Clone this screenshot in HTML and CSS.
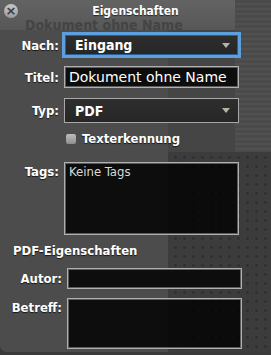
FILE: index.html
```html
<!DOCTYPE html>
<html lang="de">
<head>
    <meta charset="UTF-8">
    <title>Eigenschaften</title>
    <link rel="stylesheet" href="styles.css">
</head>
<body>
    <div class="hud">
        <div class="titlebar">
            <span class="close">&#215;</span>
            <span class="title">Eigenschaften</span>
        </div>
        <div class="ghost">Dokument ohne Name</div>

        <div class="row row-nach">
            <label class="lbl">Nach:</label>
            <div class="popup focus">
                <span>Eingang</span>
                <span class="arrow"></span>
            </div>
        </div>

        <div class="row row-titel">
            <label class="lbl">Titel:</label>
            <div class="field">Dokument ohne Name</div>
        </div>

        <div class="row row-typ">
            <label class="lbl">Typ:</label>
            <div class="popup">
                <span>PDF</span>
                <span class="arrow"></span>
            </div>
        </div>

        <div class="row row-check">
            <span class="check"></span>
            <span class="check-text">Texterkennung</span>
        </div>

        <div class="row row-tags">
            <label class="lbl top">Tags:</label>
            <div class="field area tags">Keine Tags</div>
        </div>

        <div class="section-title">PDF-Eigenschaften</div>

        <div class="row row-autor wide">
            <label class="lbl">Autor:</label>
            <div class="field small"></div>
        </div>

        <div class="row row-betreff wide">
            <label class="lbl top">Betreff:</label>
            <div class="field area betreff"></div>
        </div>
    </div>
</body>
</html>
```

FILE: styles.css
```css
body, html {
    margin: 0;
    padding: 0;
    background: #3a3a3a;
    font-family: "DejaVu Sans Condensed", "DejaVu Sans", sans-serif;
    color: #ffffff;
}

.hud {
    width: 271px;
    height: 352px;
    box-sizing: border-box;
    border-radius: 0 0 7px 7px;
    overflow: hidden;
    background:
        linear-gradient(#636363, #575757 30px, transparent 30px) top left / 235px 100% no-repeat,
        linear-gradient(#4c4c4c, #4c4c4c) top left / 168px 100% no-repeat,
        linear-gradient(#454545, #454545) 168px 0 / 67px 152px no-repeat,
        repeating-linear-gradient(#4a4a4a 0, #4a4a4a 3px, #515151 3px, #515151 5px) 235px 0 / 36px 152px no-repeat,
        radial-gradient(circle, #2f2f2f 1px, transparent 1.6px) 0 0 / 9px 9px,
        #3c3c3c;
}

.titlebar {
    height: 17px;
    padding-top: 2px;
    display: flex;
    align-items: center;
    justify-content: center;
    position: relative;
}

.title {
    font-size: 12px;
    font-weight: bold;
    text-shadow: 0 1px 1px rgba(0, 0, 0, 0.6);
}

.close {
    position: absolute;
    left: 4px;
    top: 4px;
    width: 14px;
    height: 14px;
    border-radius: 50%;
    background: linear-gradient(#c8c8c8, #9a9a9a);
    color: #3a3a3a;
    font-family: "DejaVu Sans", sans-serif;
    font-size: 13px;
    font-weight: bold;
    line-height: 14px;
    text-align: center;
}

.ghost {
    height: 13px;
    line-height: 13px;
    padding-left: 25px;
    font-size: 14px;
    font-weight: bold;
    color: #444444;
    white-space: nowrap;
}

.row {
    display: flex;
    align-items: center;
}

.lbl {
    width: 64px;
    flex: none;
    text-align: right;
    font-size: 13px;
    font-weight: bold;
    text-shadow: 0 1px 1px rgba(0, 0, 0, 0.7);
    padding-right: 5px;
    box-sizing: border-box;
}

.lbl.top {
    align-self: flex-start;
    padding-top: 2px;
}

.row-nach { margin-top: 0; }
.row-titel { margin-top: 8px; }
.row-typ { margin-top: 10px; }
.row-check { margin-top: 8px; padding-left: 66px; }
.row-tags { margin-top: 16px; }
.row-autor { margin-top: 10px; }
.row-betreff { margin-top: 9px; }

.wide .lbl {
    width: 67px;
    padding-right: 5px;
}

.popup {
    width: 175px;
    height: 25px;
    box-sizing: border-box;
    border: 1px solid #a8a8a8;
    background: linear-gradient(#2e2e2e, #262626);
    display: flex;
    align-items: center;
    justify-content: space-between;
    padding: 0 8px 0 10px;
    font-size: 14px;
    font-weight: bold;
}

.popup.focus {
    width: 179px;
    height: 26px;
    margin-left: -2px;
    border: 3px solid #5b9fdc;
    box-shadow: inset 0 0 0 1px #2d5f94;
    padding-left: 10px;
}

.arrow {
    width: 0;
    height: 0;
    border-left: 4px solid transparent;
    border-right: 4px solid transparent;
    border-top: 5px solid #b9b3a6;
}

.field {
    width: 175px;
    height: 22px;
    box-sizing: border-box;
    border: 1px solid #b0b0b0;
    box-shadow: inset 0 0 0 1px #5a5a5a;
    background: #0d0d0d;
    font-family: "DejaVu Sans", sans-serif;
    font-size: 14px;
    line-height: 20px;
    padding-left: 4px;
    white-space: nowrap;
}

.field.area {
    background: rgba(0, 0, 0, 0.82);
}

.tags {
    height: 73px;
    line-height: 18px;
    color: #d8d8d8;
    font-family: "DejaVu Sans Condensed", "DejaVu Sans", sans-serif;
    font-size: 13px;
}

.field.small {
    height: 21px;
}

.betreff {
    height: 51px;
}

.check {
    width: 10px;
    height: 10px;
    border-radius: 2px;
    background: linear-gradient(#bdbdbd, #8e8e8e);
    margin-right: 6px;
}

.check-text {
    font-size: 13px;
    font-weight: bold;
    text-shadow: 0 1px 1px rgba(0, 0, 0, 0.7);
}

.section-title {
    margin-top: 8px;
    padding-left: 13px;
    font-size: 13px;
    font-weight: bold;
    text-shadow: 0 1px 1px rgba(0, 0, 0, 0.7);
}
```
